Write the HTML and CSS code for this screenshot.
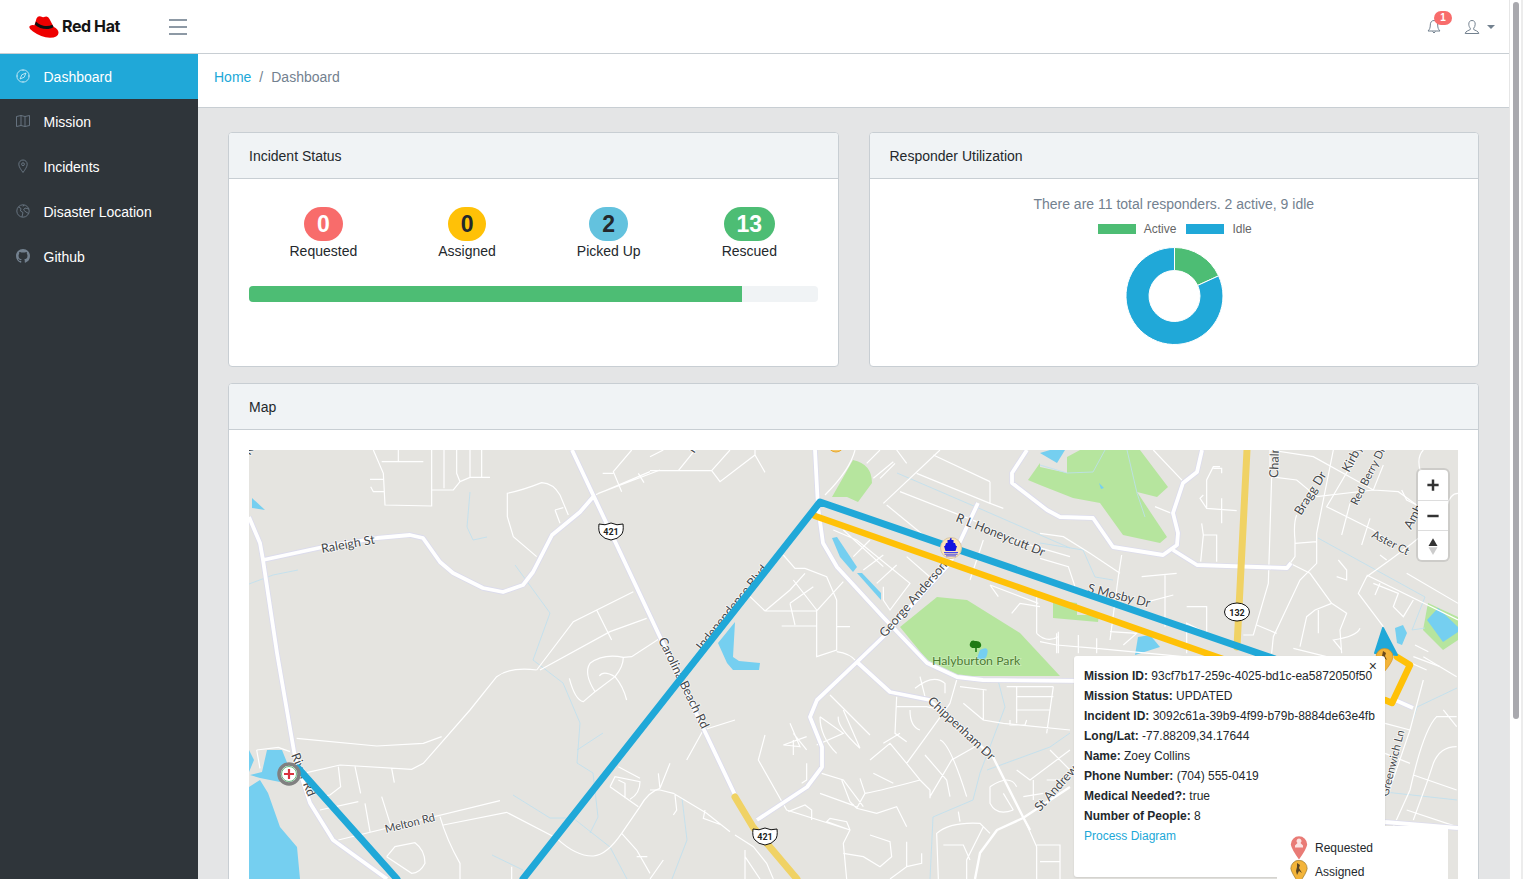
FILE: index.html
```html
<!DOCTYPE html>
<html lang="en">
<head>
<meta charset="utf-8">
<title>Emergency Response Dashboard</title>
<link rel="stylesheet" href="styles.css">
</head>
<body>
<div class="page">
  <header class="topbar">
    <a class="brand" href="#">
      <svg class="hat" viewBox="0 0 30 22">
        <path class="hat-red" d="M7.500 2.500Q9-.5 12 .6Q14 1.800 16 .8Q19-.4 20.500 3L24.500 10.800Q29.800 13.500 29.500 17Q29 21.800 21 21.800Q12 21.300 4 15.500Q-.2 13 .4 10.500Q1.500 8.300 5.500 9.200Z"/>
        <path class="hat-band" d="M5.700 8.500Q6.800 6.600 7 5.500C10 8.800 17 11.800 23.400 8.800L24.500 11C20 14.500 11 13.500 5.700 8.500Z"/>
      </svg>
      <span class="brand-text">Red Hat</span>
    </a>
    <button class="toggler" type="button" aria-label="Toggle"><span></span><span></span><span></span></button>
    <div class="top-right">
      <div class="bell">
        <svg class="bell-icon" viewBox="0 0 16 16"><path d="M8 1.500C5.500 1.500 4.300 3.500 4.300 6C4.300 9 3.500 10.500 2 12H14C12.500 10.500 11.700 9 11.700 6C11.700 3.500 10.500 1.500 8 1.500ZM6.500 12.500Q8 15.500 9.500 12.500"/></svg>
        <span class="bell-badge">1</span>
      </div>
      <svg class="user-icon" viewBox="0 0 16 16"><path d="M8 1.500C5.800 1.500 4.800 3 4.800 5.200C4.800 7 5.500 8.300 6.300 9.200V10.500C5 11.500 1.500 12 1.200 14.500H14.800C14.500 12 11 11.500 9.700 10.500V9.200C10.500 8.300 11.200 7 11.200 5.200C11.200 3 10.200 1.500 8 1.500Z"/></svg>
      <span class="caret"></span>
    </div>
  </header>
  <div class="shell">
    <nav class="sidebar">
      <a class="nav-item active" href="#">
        <svg class="nav-icon" viewBox="0 0 14 14"><circle cx="7" cy="7" r="6.200"/><path d="M4 10L5.800 5.800L10 4L8.200 8.200ZM7 .8V2M7 12V13.200M.8 7H2M12 7H13.200"/></svg>
        <span>Dashboard</span>
      </a>
      <a class="nav-item" href="#">
        <svg class="nav-icon" viewBox="0 0 14 14"><path d="M.5 2.500L5 1.500L9 2.500L13.500 1.500V11.500L9 12.500L5 11.500L.5 12.500ZM5 1.500V11.500M9 2.500V12.500"/></svg>
        <span>Mission</span>
      </a>
      <a class="nav-item" href="#">
        <svg class="nav-icon" viewBox="0 0 14 14"><path d="M7 13.500C5 10.500 2.800 8 2.800 5.200A4.200 4.200 0 0 1 11.200 5.200C11.200 8 9 10.500 7 13.500Z"/><circle cx="7" cy="5.200" r="1.400"/></svg>
        <span>Incidents</span>
      </a>
      <a class="nav-item" href="#">
        <svg class="nav-icon" viewBox="0 0 14 14"><circle cx="7" cy="7" r="6.200"/><path d="M2.500 3L5 4.500L4.500 7L7 8.500L6 12.800M12.800 5L9 4L7.500 6L10 8L12.500 9.500M8 .9L7 2.500"/></svg>
        <span>Disaster Location</span>
      </a>
      <a class="nav-item" href="#">
        <svg class="nav-icon nav-solid" viewBox="0 0 16 16"><path d="M8 0C3.580 0 0 3.580 0 8c0 3.540 2.290 6.530 5.470 7.590.4.070.55-.17.55-.38 0-.19-.01-.82-.01-1.490-2.010.37-2.530-.49-2.690-.94-.09-.23-.48-.94-.82-1.130-.28-.15-.68-.52-.01-.53.63-.01 1.080.58 1.230.82.720 1.210 1.870.87 2.330.66.070-.52.280-.87.510-1.070-1.780-.2-3.640-.89-3.640-3.950 0-.87.310-1.590.820-2.150-.08-.2-.36-1.020.080-2.120 0 0 .67-.21 2.200.82.640-.18 1.320-.27 2-.27.68 0 1.360.09 2 .27 1.530-1.040 2.200-.82 2.200-.82.44 1.100.16 1.920.08 2.120.51.56.82 1.270.82 2.150 0 3.070-1.870 3.750-3.650 3.950.29.25.54.73.54 1.480 0 1.070-.01 1.930-.01 2.200 0 .21.15.46.55.38A8.013 8.013 0 0016 8c0-4.420-3.580-8-8-8z"/></svg>
        <span>Github</span>
      </a>
    </nav>
    <main class="main">
      <div class="breadcrumb">
        <a href="#">Home</a>
        <span class="crumb-sep">/</span>
        <span class="crumb-current">Dashboard</span>
      </div>
      <div class="content">
        <div class="card-row">
          <section class="card">
            <div class="card-header">Incident Status</div>
            <div class="status-body">
              <div class="status-row">
                <div class="status"><span class="pill pill-red">0</span><span>Requested</span></div>
                <div class="status"><span class="pill pill-yellow">0</span><span>Assigned</span></div>
                <div class="status"><span class="pill pill-cyan">2</span><span>Picked Up</span></div>
                <div class="status"><span class="pill pill-green">13</span><span>Rescued</span></div>
              </div>
              <div class="progress"><div class="progress-bar" style="width:86.67%"></div></div>
            </div>
          </section>
          <section class="card">
            <div class="card-header">Responder Utilization</div>
            <div class="chart-body">
              <div class="chart-title">There are 11 total responders. 2 active, 9 idle</div>
              <div class="chart-legend">
                <span class="chart-key key-active"></span><span class="chart-label">Active</span>
                <span class="chart-key key-idle"></span><span class="chart-label">Idle</span>
              </div>
              <svg class="donut" viewBox="-.5 0 98 98">
                <path class="slice-active" d="M49 .5A48.500 48.500 0 0 1 93.100 28.850L72.200 38.400A25.500 25.500 0 0 0 49 23.500Z"/>
                <path class="slice-idle" d="M93.100 28.850A48.500 48.500 0 1 1 49 .5L49 23.500A25.500 25.500 0 1 0 72.200 38.400Z"/>
              </svg>
            </div>
          </section>
        </div>
        <section class="card">
          <div class="card-header">Map</div>
          <div class="map-body">
            <div class="map">
              <svg class="map-canvas" viewBox="249 450 1209 600" aria-hidden="true">
                <g class="water">
                  <path d="M249 787L260 780L268 793L280 827L297 847L300 879V900H249Z"/>
                  <path d="M267 750L282 750L290 770L280 782L260 778L250 775L262 772Z"/>
                  <path d="M249 750L254 760L249 772Z"/>
                  <path d="M252 498L265 510L252 508Z"/>
                  <path d="M832 538L837 537L857 567L853 572L840 557Z"/>
                  <path d="M857 573L862 573L881 593L881 600Z"/>
                  <path d="M718 643L735 622L733 657L739 661L760 663L759 670L733 670L727 663Z"/>
                  <path d="M1138 637L1150 635L1160 647L1135 655Z"/>
                  <path d="M1040 453L1050 450L1065 450L1057 463Z"/>
                  <path d="M1395 628L1403 625L1407 633L1402 645L1397 643Z"/>
                </g>
                <g class="park">
                  <path d="M900 627L937 597L967 600L1020 633L1060 676H960L927 660Z"/>
                  <path d="M853 460Q872 464 872 483L858 502L847 497L832 497Z"/>
                  <path d="M1040 467L1067 473L1067 457L1080 450H1140L1168 487L1157 497L1137 492L1167 537L1160 543L1123 535L1100 503L1073 498L1040 485L1028 480L1040 463Z"/>
                  <path d="M1053 600L1077 603V615H1099L1098 622L1053 618Z"/>
                  <path d="M1428 603L1458 617V640L1443 650L1423 630Z"/>
                </g>
                <path class="water-fill" d="M1438 608L1458 627V632L1443 642L1427 620Z"/>
                <path class="water-fill" d="M980 650Q990 645 987 655Q985 662 977 658Z"/>
                <path class="water-fill" d="M1099 483L1104 488L1101 489Z"/>
                <g class="stream">
                  <path d="M249 584L273 575L298 570M470 492L467 527L473 540L487 537M515 565L550 613L533 660L563 683L580 723L577 763L593 773L598 817L590 833M603 733L577 750M513 795L550 818L573 818L610 847L627 879M492 855L523 870"/>
                  <path d="M897 473L983 510L1070 548M998 680L1005 707L980 773L973 800L933 817L930 879M987 770L1050 747L1070 733M682 798L687 840L672 879M1040 543L1083 550L1095 577L1113 580M1318 538L1425 597L1412 630L1425 628M1127 450L1137 493L1145 517M1040 465L1067 473L1093 472L1105 450M1457 688L1417 707L1413 720M1385 792L1457 800"/>
                </g>
                <g class="minor" transform="translate(240 440) scale(.33333)">
                  <path d="M400 30L430 100L435 195L575 198V30M425 65H550M475 30V65M390 118H430M392 140L400 155H433M612 30V145M650 30V100L660 125M690 30V112M725 30V112M660 125L690 112H750M575 150H640L660 125"/>
                  <path d="M1175 30L1120 95L1145 155M1088 100H1120M1065 165L1230 95M1075 160L1260 90M1195 100L1212 128M890 350L820 290L802 230V160Q850 150 905 128Q940 130 960 165L985 225M945 210L970 203M945 210L960 250"/>
                  <path d="M1180 455L1000 545L890 690M1220 535L1110 575L900 690M1070 510L1115 600M1260 595L1175 650L1150 652Q1090 640 1050 670Q1030 700 1065 755L1030 785Q1005 780 988 715M1065 755L1125 710Q1090 690 1078 708M1125 710Q1150 740 1160 780M1150 652Q1150 680 1125 710"/>
                  <path d="M890 690Q810 680 770 710L690 810L550 970L515 988L300 975L200 998M170 895L410 918L550 910L605 890M295 980L302 1040L270 1065L240 1070M345 980L362 1060M455 985L463 1028M240 1110L355 1085M375 1090L390 1175M425 1070L455 1165M295 1200L780 1082M610 1155L800 1117L950 1195Q1010 1250 1060 1248Q1100 1245 1145 1180L1200 1100Q1225 1055 1260 1045M600 1130Q620 1200 660 1270V1317M440 1250L465 1220L525 1208Q555 1230 555 1270Q540 1300 515 1300L440 1250M1110 1040L1195 1100M1110 1040L1125 1010L1200 1025Q1200 1060 1170 1078M1135 1020L1155 1030V1075M1135 980L1200 1015M1145 1180L1190 1230L1230 1300M1190 1250L1222 1250M815 1280V1317M50 930L60 985M50 930L115 922L150 935"/>
                </g>
                <g class="minor" transform="translate(650 440) scale(.33333)">
                  <path d="M0 92H185L210 125L315 45L345 97M315 45V30M85 92L135 30M185 92L240 30M0 50L40 30M525 165Q600 90 615 30M670 115L730 65M690 115L735 70M650 70L690 30M740 30L770 70"/>
                  <path d="M700 190L870 30M850 45L1020 125M800 100L1020 190M750 155L980 245M710 195L850 310M1020 125V190L1060 205M550 270L620 300L780 430L720 510L700 480V440M580 270L700 380M610 350L660 300M640 390L700 345M680 430L740 375"/>
                  <path d="M400 345L435 385H465L530 410L560 480V630L500 650V510M345 513H500L580 425M345 513L300 470M345 513L420 450L465 400M420 490L435 555M395 558H500M560 560H600M420 490L490 440M500 510L430 420M560 635Q600 640 620 665"/>
                  <path d="M770 350L850 420M960 420L1000 300M1020 435L1165 490M1085 520L1110 490L1170 500M1045 470L1020 435M1160 580Q1190 610 1225 590M1160 450V580M1220 580V640M1260 350L1090 300"/>
                  <path d="M540 765L660 885M580 810L630 925M510 830L580 880L500 915M565 830Q560 860 630 925M510 830Q510 890 560 940M420 850L450 920Q410 915 400 915L470 890M430 880L470 930M430 900V945M470 970V1020L455 1030M345 885L325 960L410 1110L600 1170L530 1145L540 1135L590 1145L600 1170L580 1210L590 1317M415 1115L465 1095L485 1110V1140"/>
                  <path d="M515 1000L580 1020L640 1100M575 1020L600 1085L620 1105L680 1120L740 1100L770 1160M510 1060L620 1100M630 1015L645 1060L620 1105M645 1060Q700 1050 810 1020L840 1050V1075M670 1000L730 1030M660 960L720 910L770 970L810 1020M700 910L750 880M740 770L735 880L770 905M740 800H830Q900 810 975 900M780 810Q780 860 810 870M975 920L905 960L840 1070M825 945L890 1020L900 1070M870 900Q900 910 950 1070M770 970Q850 860 900 790L920 720M1000 840L940 790M1000 750V810L1000 840L1060 850L1260 870M1070 740H1210M1100 740V850M1100 770H1210M1100 810H1200M1210 740L1190 880M1080 840V855H1125L1130 840M930 740L1010 750M810 710L825 770M795 745Q850 700 885 730V760"/>
                  <path d="M30 1045L60 970M0 1050H30L70 1060L170 1120L240 1175M30 1045L25 1000M75 1065L80 1110L70 1125M165 1110L160 1135L215 1155M255 1185L310 1220L350 1270L370 1317M285 1230V1317M285 1250L330 1317M0 1317L40 1260M110 960L160 870L255 840"/>
                  <path d="M660 1185L720 1205L725 1250L690 1280L640 1250L580 1240M770 1205V1280L720 1317M770 1280L815 1270V1240M865 1317L860 1180Q900 1145 990 1150L1020 1180M930 1145L925 1115M880 1215H940L960 1260M1000 1160L950 1260V1317M1160 1220L1120 1130M1160 1220V1317M1160 1215H1230V1317M1170 1265H1230M1020 1040Q1080 1000 1100 1040M1020 1040V1090Q1040 1130 1090 1110M1060 1060L1090 1110M1100 990L1140 1020L1260 930M1150 1020V1080M1190 1020H1260M1120 1070L1180 1060M1200 930L1260 990"/>
                </g>
                <g class="minor" transform="translate(1040 440) scale(.33333)">
                  <path d="M340 30L430 125M345 200L395 220M540 80H520L500 120V205L590 212M490 165L480 175L500 205M545 175V250M520 85H545V100M490 285H530V365M485 250L490 285L482 365"/>
                  <path d="M245 345L235 410L210 600M0 280L70 290L150 340L240 400M305 410L410 400M375 405V560M210 575L290 580L250 615M305 490L400 465M440 500H500V580L440 550V640M0 355L85 380L105 440M55 575V640M115 585V640M170 595V640M0 605L50 615L170 625L430 650"/>
                  <path d="M690 30V110M690 110L770 120L830 170L1000 150L1075 155L1130 195M695 110L685 430L640 585H610M690 30L820 50L1000 150L1030 75M880 30L830 280V370L780 420L700 590L695 640M770 225Q760 250 765 300V350L750 370L810 400L875 490L920 520L900 570L905 640M765 310L830 305"/>
                  <path d="M960 30L860 200L1000 270L1040 300M990 235L965 315M930 190L905 285M1130 195L1100 180L1085 150M1254 160Q1230 160 1220 200Q1215 240 1050 360L980 410L955 460L1030 560M1020 345L1040 360M1000 430L1075 460L1060 500L1090 530L1120 480M1020 430L1005 465M980 405L1254 540M1100 400L1254 490M895 360L920 390V420L890 410M875 490L825 510L800 530L780 620M835 510V580M650 555L710 580M960 565Q950 590 880 600L905 630M760 625L860 650M1125 615L1165 635M1120 650L1200 680M1150 30Q1130 50 1140 90L1190 100L1180 150"/>
                </g>
                <g class="minor" transform="translate(1060 620) scale(.33333)">
                  <path d="M975 310L1050 330M1090 180L1050 330L985 520M1190 290H1130Q1090 330 1050 510L1000 620M1050 430L975 400M1060 465L1190 510M1190 380Q1140 380 1120 430L1100 490L1060 600M1150 270L1190 320M1090 110L1190 170M1040 570L1190 620M1010 110L1100 150"/>
                </g>
                <path class="major-case" d="M249 517L260 543L263 560L277 653L295 757L310 803L333 840L387 879M263 560L323 547L377 538L410 535L423 538L440 562L453 573L483 588L503 592L523 585L533 572L552 535L580 512L593 497M572 450L660 637L735 795M815 450L818 507L823 543L837 567L883 617L927 663L957 677L983 680L1090 681M978 503L950 563L883 637L857 662L817 700L810 717L822 747L822 767L807 787L757 820M857 662L890 692L930 700M1027 450L1012 473L1012 483L1047 510L1060 517L1093 518L1113 547L1163 555L1177 545L1178 533L1173 513L1183 483L1197 472L1202 450M1173 550L1197 565L1287 568L1291 563M1395 700L1413 708M1385 822L1458 828"/>
                <path class="major" d="M249 517L260 543L263 560L277 653L295 757L310 803L333 840L387 879M263 560L323 547L377 538L410 535L423 538L440 562L453 573L483 588L503 592L523 585L533 572L552 535L580 512L593 497M572 450L660 637L735 795M815 450L818 507L823 543L837 567L883 617L927 663L957 677L983 680L1090 681M978 503L950 563L883 637L857 662L817 700L810 717L822 747L822 767L807 787L757 820M857 662L890 692L930 700M1027 450L1012 473L1012 483L1047 510L1060 517L1093 518L1113 547L1163 555L1177 545L1178 533L1173 513L1183 483L1197 472L1202 450M1173 550L1197 565L1287 568L1291 563M1395 700L1413 708M1385 822L1458 828"/>
                <path class="road-mid" d="M930 700L993 757L1023 817L1030 830M1023 818L997 830L980 853L975 879M1023 818L1070 787"/>
                <path class="highway" d="M735 797L753 827L797 879M1247 450L1237 647"/>
                <g class="label">
                  <text transform="translate(322 553) rotate(-10)">Raleigh St</text>
                  <text transform="translate(658 640) rotate(64)">Carolina Beach Rd</text>
                  <text transform="translate(702 651) rotate(-51)">Independence Blvd</text>
                  <text transform="translate(885 638) rotate(-49)">George Anderson</text>
                  <text transform="translate(955 521) rotate(22)">R L Honeycutt Dr</text>
                  <text transform="translate(1087 592) rotate(14)">S Mosby Dr</text>
                  <text transform="translate(927 702) rotate(43)">Chippenham Dr</text>
                  <text transform="translate(1040 812) rotate(-48)">St Andrews</text>
                  <text class="label-small" transform="translate(386 833) rotate(-14)">Melton Rd</text>
                  <text transform="translate(291 755) rotate(68)">River Rd</text>
                  <text transform="translate(1278 478) rotate(-88)">Chalmers</text>
                  <text transform="translate(1349 473) rotate(-62)">Kirby</text>
                  <text class="label-small" transform="translate(1357 506) rotate(-63)">Red Berry Dr</text>
                  <text transform="translate(1301 516) rotate(-58)">Bragg Dr</text>
                  <text class="label-small" transform="translate(1371 537) rotate(27)">Aster Ct</text>
                  <text transform="translate(1411 530) rotate(-62)">Amherst</text>
                  <text class="label-small" transform="translate(1388 797) rotate(-76)">Greenwich Ln</text>
                  <text transform="translate(250 456) rotate(-60)">Rd</text>
                  <text transform="translate(694 454) rotate(-55)">Rd</text>
                  <text class="label-park" x="932" y="665">Halyburton Park</text>
                </g>
                <g class="shield">
                  <path d="M599 524Q605 526 611 523Q617 526 623 524Q624 532 621 535Q618 539 611 540Q604 539 601 535Q598 532 599 524Z"/>
                  <text x="611" y="535">421</text>
                  <path d="M753 829Q759 831 765 828Q771 831 777 829Q778 837 775 840Q772 844 765 845Q758 844 755 840Q752 837 753 829Z"/>
                  <text x="765" y="840">421</text>
                  <ellipse cx="1237" cy="612" rx="12.500" ry="9"/>
                  <text x="1237" y="616">132</text>
                </g>
                <path class="tree-top" d="M975 641a5 4 0 0 1 6 3a3 3 0 0 1-2 4h-2.200V652h-1.600V648h-3a3 3 0 0 1 2.800-7Z"/>
                <path class="route route-gold" d="M815 516L1240 665M1397 657L1410 665L1392 703L1385 700"/>
                <path class="route route-blue" d="M298 768L397 879M523 879L820 502L1275 659"/>
                <path class="route-tip" d="M1383 628L1375 653L1397 655Z"/>
                <g class="marker-hospital">
                  <circle class="h-ring" cx="289" cy="774" r="10"/>
                  <circle class="h-inner" cx="289" cy="774" r="7.500"/>
                  <path class="h-cross" d="M284 774H294M289 769V779"/>
                </g>
                <g class="marker-boat">
                  <circle class="b-disc" cx="951" cy="548" r="10.500"/>
                  <path class="b-ship" d="M950.500 538h1v2h2v3h1.500l1 3h1l-1.500 5h-10l-1.500-5h1l1-3h1.500v-3h2Z"/>
                  <path class="b-waves" d="M944 552.500h14M944.500 554.200h13M946 555.900h10"/>
                </g>
                <circle class="m-gold" cx="836" cy="444" r="8"/>
                <g class="m-pin-gold">
                  <path d="M1376 657A8.500 8.500 0 0 1 1393 657Q1392 663 1384 672Q1377 663 1376 657Z"/>
                  <path class="m-figure" d="M1383 651l3 2-1 3 2 4-3-2-2 3v-5Z"/>
                </g>
              </svg>

              <div class="map-controls">
                <button type="button" class="ctrl-btn" aria-label="Zoom in"><svg viewBox="0 0 16 16"><path class="ctrl-plus" d="M8 3V13M3 8H13"/></svg></button>
                <button type="button" class="ctrl-btn" aria-label="Zoom out"><svg viewBox="0 0 16 16"><path class="ctrl-plus" d="M3 8H13"/></svg></button>
                <button type="button" class="ctrl-btn" aria-label="Reset north"><svg viewBox="0 0 16 16"><path class="north" d="M8 1L12 8H4Z"/><path class="south" d="M8 16L12 9H4Z"/></svg></button>
              </div>

              <div class="popup">
                <span class="popup-close">×</span>
                <div><strong>Mission ID:</strong> 93cf7b17-259c-4025-bd1c-ea5872050f50</div>
                <div><strong>Mission Status:</strong> UPDATED</div>
                <div><strong>Incident ID:</strong> 3092c61a-39b9-4f99-b79b-8884de63e4fb</div>
                <div><strong>Long/Lat:</strong> -77.88209,34.17644</div>
                <div><strong>Name:</strong> Zoey Collins</div>
                <div><strong>Phone Number:</strong> (704) 555-0419</div>
                <div><strong>Medical Needed?:</strong> true</div>
                <div><strong>Number of People:</strong> 8</div>
                <a href="#">Process Diagram</a>
              </div>

              <div class="map-legend">
                <div class="legend-row">
                  <svg class="legend-pin" viewBox="0 0 18 24"><path class="pin-red" d="M.8 8.500A8.200 8.200 0 0 1 17.200 8.500Q16.500 13 9 23.500Q1.500 13 .8 8.500Z"/><path class="pin-red-mark" d="M9 2.500a2.500 2.500 0 0 1 1.500 4.500l2.500 2.500v2h-8v-2l2.500-2.500A2.500 2.500 0 0 1 9 2.500Z"/></svg>
                  <span>Requested</span>
                </div>
                <div class="legend-row">
                  <svg class="legend-pin" viewBox="0 0 18 24"><path class="pin-gold" d="M.8 8.500A8.200 8.200 0 0 1 17.200 8.500Q16.500 13 9 23.500Q1.500 13 .8 8.500Z"/><path class="pin-gold-mark" d="M7 3l3 2-1 3 3 5-3-2-2 4-1-4 1-4Z"/></svg>
                  <span>Assigned</span>
                </div>
              </div>
            </div>
          </div>
        </section>
      </div>
    </main>
  </div>
</div>
<div class="scrollbar"><div class="scroll-thumb"></div></div>
</body>
</html>
```
FILE: styles.css
```css
* { box-sizing: border-box; }
html, body { margin: 0; height: 100%; overflow: hidden; }
body {
  display: flex;
  font-family: "Liberation Sans", Arial, sans-serif;
  font-size: 14px;
  line-height: 21px;
  color: #23282c;
  background: #fff;
}
a { color: #20a8d8; text-decoration: none; }
button { font: inherit; }

.page { flex: 1; min-width: 0; height: 879px; display: flex; flex-direction: column; overflow: hidden; }
.scrollbar { width: 14px; height: 879px; padding: 2px 3px 0 3px; background: #fff; border-left: 1px solid #e6e6e6; border-right: 2px solid #ececec; flex: none; }
.scroll-thumb { width: 6px; height: 717px; background: #a9a9ae; border-radius: 3px; }

.topbar { flex: none; height: 54px; display: flex; align-items: center; background: #fff; border-bottom: 1px solid #c8ced3; }
.brand { width: 157px; padding-left: 29px; display: flex; align-items: center; gap: 3px; color: #151515; }
.hat { width: 30px; height: 22px; flex: none; }
.hat-red { fill: #e00; }
.hat-band { fill: #111; }
.brand-text { font-family: Inter, "Liberation Sans", sans-serif; font-weight: 700; font-size: 16px; letter-spacing: -.4px; }
.toggler { width: 18px; height: 20px; margin-left: 12px; padding: 2px 0; border: 0; background: none; display: flex; flex-direction: column; justify-content: space-between; }
.toggler span { display: block; height: 2px; width: 18px; background: #8d99a5; }
.top-right { margin-left: auto; display: flex; align-items: center; padding-right: 14px; }
.bell { position: relative; width: 16px; height: 16px; margin-right: 22px; }
.bell-icon, .user-icon { fill: none; stroke: #73818f; stroke-width: 1; display: block; }
.bell-icon { width: 16px; height: 16px; }
.bell-badge { position: absolute; left: 8px; top: -8px; width: 18px; height: 14px; border-radius: 7px; background: #f86c6b; color: #fff; font-size: 10px; font-weight: 700; line-height: 14px; text-align: center; }
.user-icon { width: 16px; height: 16px; }
.caret { margin-left: 7px; width: 0; height: 0; border-left: 4px solid transparent; border-right: 4px solid transparent; border-top: 4px solid #73818f; }

.shell { flex: 1; min-height: 0; display: flex; }
.sidebar { width: 198px; flex: none; background: #2f353a; }
.nav-item { height: 45px; padding: 2px 0 0 16px; display: flex; align-items: center; gap: 13.500px; color: #fff; }
.nav-item.active { background: #20a8d8; }
.nav-icon { width: 14px; height: 14px; flex: none; fill: none; stroke: #73818f; stroke-width: .8; position: relative; top: -2px; }
.nav-item.active .nav-icon { stroke: #fff; opacity: .85; }
.nav-solid { fill: #73818f; stroke: none; }

.main { flex: 1; min-width: 0; background: #e4e5e6; }
.breadcrumb { height: 54px; padding: 0 16px 6px; display: flex; align-items: center; background: #fff; border-bottom: 1px solid #c8ced3; }
.crumb-sep { color: #73818f; margin: 0 8px; }
.crumb-current { color: #73818f; }

.content { padding: 24px 30px; display: flex; flex-direction: column; gap: 16px; }
.card-row { display: grid; grid-template-columns: 1fr 1fr; gap: 30px; height: 235px; }
.card { background: #fff; border: 1px solid #c8ced3; border-radius: 4px; overflow: hidden; }
.card-header { height: 46px; padding: 2px 20px 0; display: flex; align-items: center; background: #f0f3f5; border-bottom: 1px solid #c8ced3; }

.status-body { padding: 28px 20px 0; }
.status-row { display: flex; justify-content: space-around; }
.status { display: flex; flex-direction: column; align-items: center; }
.pill { height: 34px; padding: 0 13px; border-radius: 17px; font-size: 23px; font-weight: 700; line-height: 35px; }
.pill-red { background: #f86c6b; color: #fff; }
.pill-yellow { background: #ffc107; color: #23282c; }
.pill-cyan { background: #63c2de; color: #23282c; }
.pill-green { background: #4dbd74; color: #fff; }
.progress { height: 16px; margin-top: 24px; background: #f0f3f5; border-radius: 4px; overflow: hidden; }
.progress-bar { height: 100%; background: #4dbd74; }

.chart-body { padding-top: 15px; text-align: center; }
.chart-title { color: #73818f; }
.chart-legend { height: 16px; margin-top: 6px; padding-left: 2px; display: flex; justify-content: center; align-items: center; font-size: 12px; line-height: 16px; color: #666; }
.chart-key { width: 38px; height: 10px; margin-right: 8px; }
.chart-label { margin-right: 10px; }
.chart-label:last-child { margin-right: 0; }
.key-active { background: #4dbd74; }
.key-idle { background: #20a8d8; }
.donut { display: block; width: 98px; height: 98px; margin: 10px auto 0; }
.slice-active { fill: #4dbd74; stroke: #fff; stroke-width: 1; }
.slice-idle { fill: #20a8d8; stroke: #fff; stroke-width: 1; }

.map-body { padding: 20px; }
.map { position: relative; height: 600px; background: #e5e4e0; overflow: hidden; }
.map-canvas { display: block; width: 1209px; height: 600px; }
.water path, .water-fill { fill: #75cff0; }
.park path { fill: #b6e59e; }
.stream path { fill: none; stroke: #bcdff0; stroke-width: .8; }
.minor path { fill: none; stroke: #fff; stroke-width: 1.200; vector-effect: non-scaling-stroke; }
.major-case { fill: none; stroke: #dcdcec; stroke-width: 5.500; stroke-linejoin: round; }
.major { fill: none; stroke: #fff; stroke-width: 3.800; stroke-linejoin: round; }
.road-mid { fill: none; stroke: #fff; stroke-width: 2.400; stroke-linejoin: round; }
.highway { fill: none; stroke: #f0d264; stroke-width: 7; stroke-linecap: round; }
.label text { font-family: Lato, "Liberation Sans", sans-serif; font-size: 12.500px; fill: #44474a; stroke: #fff; stroke-width: 1.500px; paint-order: stroke; stroke-opacity: .8; }
.label .label-small { font-size: 11.200px; }
.label .label-park { fill: #4d7c33; font-size: 12.300px; stroke-opacity: .3; }
.shield path, .shield ellipse { fill: #fff; stroke: #111; stroke-width: 1; }
.shield text { font-family: Roboto, "Liberation Sans", sans-serif; font-size: 9px; font-weight: 700; fill: #222; text-anchor: middle; }
.tree-top { fill: #1f7a14; }
.route { fill: none; stroke-linejoin: round; stroke-linecap: round; }
.route-gold { stroke: #ffc107; stroke-width: 6.500; }
.route-blue { stroke: #20a8d8; stroke-width: 7; }
.route-tip { fill: #20a8d8; stroke: #20a8d8; stroke-width: 2; stroke-linejoin: round; }
.h-ring { fill: #fff; stroke: #808080; stroke-width: 3.500; }
.h-inner { fill: #fff; stroke: #2a9d4c; stroke-width: .7; }
.h-cross { fill: none; stroke: #d9343f; stroke-width: 2.200; }
.b-disc { fill: #fce3b5; stroke: #d8c8a8; stroke-width: 1; }
.b-ship { fill: #1414e0; }
.b-waves { fill: none; stroke: #4a4ae8; stroke-width: 1; }
.m-gold { fill: #f4c76c; stroke: #e8a92e; }
.m-pin-gold path { fill: #f3b43a; stroke: #d7941f; stroke-width: .7; }
.m-pin-gold .m-figure { fill: #6b4a1c; stroke: none; }

.map-controls { position: absolute; right: 10px; top: 20px; width: 30px; background: #fff; border-radius: 4px; box-shadow: 0 0 0 2px rgba(0,0,0,.1); display: flex; flex-direction: column; }
.ctrl-btn { height: 30px; padding: 0; border: 0; border-top: 1px solid #ddd; background: none; display: flex; align-items: center; justify-content: center; }
.ctrl-btn:first-child { border-top: 0; }
.ctrl-btn svg { width: 18px; height: 18px; }
.ctrl-plus { fill: none; stroke: #333; stroke-width: 2.200; }
.north { fill: #333; }
.south { fill: #ccc; }

.popup { position: absolute; left: 825px; top: 206px; width: 311px; height: 221px; padding: 10px; background: #fff; border-radius: 3px; box-shadow: 0 1px 2px rgba(0,0,0,.1); font-size: 12px; line-height: 20px; white-space: nowrap; }
.popup-close { position: absolute; right: 8px; top: 1px; font-size: 14px; line-height: 18px; color: #333; }
.map-legend { position: absolute; left: 1028px; top: 376px; width: 171px; height: 110px; padding: 10px 13px; background: #fff; border-radius: 3px 3px 0 0; font-size: 12px; line-height: 24px; }
.legend-row { display: flex; align-items: center; gap: 7px; height: 24px; }
.legend-pin { width: 18px; height: 24px; flex: none; }
.pin-red { fill: #e97b76; }
.pin-red-mark { fill: #fff; opacity: .8; }
.pin-gold { fill: #f3b43a; stroke: #8a6a22; stroke-width: .6; }
.pin-gold-mark { fill: #5a4522; }
```
